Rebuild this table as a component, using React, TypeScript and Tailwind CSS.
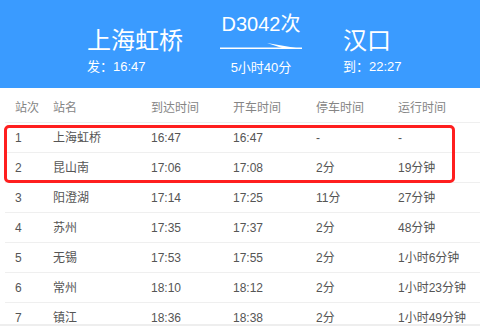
import React from "react";

const rows = [
  ["1", "上海虹桥", "16:47", "16:47", "-", "-"],
  ["2", "昆山南", "17:06", "17:08", "2分", "19分钟"],
  ["3", "阳澄湖", "17:14", "17:25", "11分", "27分钟"],
  ["4", "苏州", "17:35", "17:37", "2分", "48分钟"],
  ["5", "无锡", "17:53", "17:55", "2分", "1小时6分钟"],
  ["6", "常州", "18:10", "18:12", "2分", "1小时23分钟"],
  ["7", "镇江", "18:36", "18:38", "2分", "1小时49分钟"],
];

const heads = ["站次", "站名", "到达时间", "开车时间", "停车时间", "运行时间"];

const grid = "grid grid-cols-[38px_98px_82px_83px_82px_1fr]";

export default function App() {
  return (
    <div className="relative w-[480px] h-[326px] overflow-hidden bg-white font-['Liberation_Sans','Noto_Sans_CJK_SC',sans-serif]">
      <div className="h-[88px] bg-[#3a9bff] flex pl-[87px] text-white">
        <div className="w-[133px] flex flex-col pt-[27px]">
          <div className="text-[24px] leading-[28px]">上海虹桥</div>
          <div className="text-[13px] leading-[16px] mt-[4px]">发：16:47</div>
        </div>
        <div className="w-[82px] flex flex-col items-center pt-[12px]">
          <div className="text-[20px] leading-[24px]">D3042次</div>
          <svg width="82" height="8" viewBox="0 0 82 8" className="mt-[6px] block">
            <rect x="0" y="5.5" width="82" height="1.5" fill="white" />
            <polygon points="47,1 82,7 62,6" fill="white" />
          </svg>
          <div className="text-[13px] leading-[16px] mt-[10px]">5小时40分</div>
        </div>
        <div className="ml-[41px] flex flex-col pt-[27px]">
          <div className="text-[24px] leading-[28px]">汉口</div>
          <div className="text-[13px] leading-[16px] mt-[4px]">到：22:27</div>
        </div>
      </div>
      <div className="ml-[5px]">
        <div className={`${grid} h-[35px] pt-[5px] items-center border-b border-[#efefef] text-[12px] text-[#858585]`}>
          {heads.map((h) => (
            <div key={h} className="pl-[10px] whitespace-nowrap">{h}</div>
          ))}
        </div>
        {rows.map((r) => (
          <div key={r[0]} className={`${grid} h-[30px] items-center border-b border-[#efefef] text-[12px] text-[#555555]`}>
            {r.map((c, i) => (
              <div key={i} className="pl-[10px] whitespace-nowrap">{c}</div>
            ))}
          </div>
        ))}
      </div>
      <div className="absolute left-[4px] top-[125px] w-[451px] h-[58px] border-[3px] border-[#ff1f1f] rounded-[5px]" />
      <div className="absolute left-0 right-0 bottom-0 h-[2px] bg-[#eeeeee]" />
    </div>
  );
}
